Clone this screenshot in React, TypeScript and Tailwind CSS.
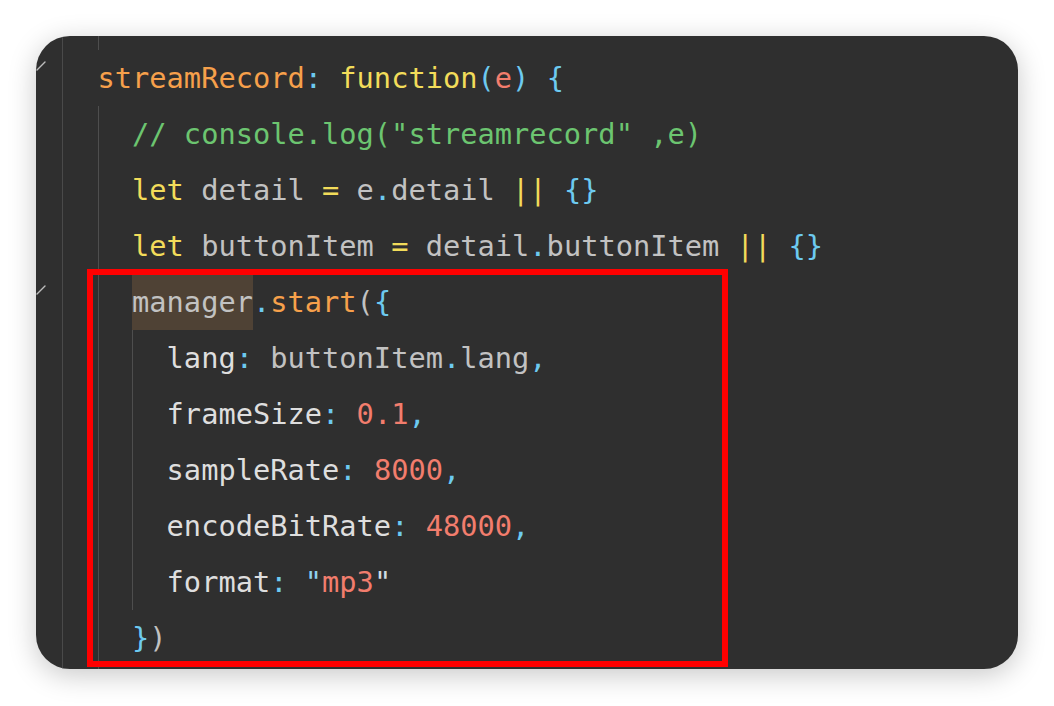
type Tok = [string, string];

const C = {
  orange: "text-[#f6a04b]",
  yellow: "text-[#f2dc5a]",
  blue: "text-[#6dcaf0]",
  salmon: "text-[#f27d6d]",
  green: "text-[#6cc570]",
  grey: "text-[#c2c2c2]",
  white: "text-[#dedede]",
};

interface Line {
  indent: number;
  guides: number[];
  fold?: boolean;
  tokens: Tok[];
}

const lines: Line[] = [
  {
    indent: 0,
    guides: [],
    fold: true,
    tokens: [
      ["streamRecord", C.orange],
      [":", C.blue],
      [" ", ""],
      ["function", C.yellow],
      ["(", C.blue],
      ["e", C.salmon],
      [")", C.blue],
      [" ", ""],
      ["{", C.blue],
    ],
  },
  {
    indent: 1,
    guides: [0],
    tokens: [['// console.log("streamrecord" ,e)', C.green]],
  },
  {
    indent: 1,
    guides: [0],
    tokens: [
      ["let", C.yellow],
      [" detail ", C.grey],
      ["=", C.yellow],
      [" e", C.grey],
      [".", C.blue],
      ["detail ", C.grey],
      ["||", C.yellow],
      [" ", ""],
      ["{}", C.blue],
    ],
  },
  {
    indent: 1,
    guides: [0],
    tokens: [
      ["let", C.yellow],
      [" buttonItem ", C.grey],
      ["=", C.yellow],
      [" detail", C.grey],
      [".", C.blue],
      ["buttonItem ", C.grey],
      ["||", C.yellow],
      [" ", ""],
      ["{}", C.blue],
    ],
  },
  {
    indent: 1,
    guides: [0],
    fold: true,
    tokens: [
      ["manager", C.grey + " bg-[#4f4235]"],
      [".", C.blue],
      ["start", C.orange],
      ["(", C.grey],
      ["{", C.blue],
    ],
  },
  {
    indent: 2,
    guides: [0, 1],
    tokens: [
      ["lang", C.white],
      [":", C.blue],
      [" buttonItem", C.grey],
      [".", C.blue],
      ["lang", C.grey],
      [",", C.blue],
    ],
  },
  {
    indent: 2,
    guides: [0, 1],
    tokens: [
      ["frameSize", C.white],
      [":", C.blue],
      [" ", ""],
      ["0.1", C.salmon],
      [",", C.blue],
    ],
  },
  {
    indent: 2,
    guides: [0, 1],
    tokens: [
      ["sampleRate", C.white],
      [":", C.blue],
      [" ", ""],
      ["8000", C.salmon],
      [",", C.blue],
    ],
  },
  {
    indent: 2,
    guides: [0, 1],
    tokens: [
      ["encodeBitRate", C.white],
      [":", C.blue],
      [" ", ""],
      ["48000", C.salmon],
      [",", C.blue],
    ],
  },
  {
    indent: 2,
    guides: [0, 1],
    tokens: [
      ["format", C.white],
      [":", C.blue],
      [" ", ""],
      ['"', "text-[#8fd2ee]"],
      ["mp3", C.salmon],
      ['"', "text-[#d0dce2]"],
    ],
  },
  {
    indent: 1,
    guides: [0],
    tokens: [
      ["}", C.blue],
      [")", C.grey],
    ],
  },
];

function Indents({ count, guides }: { count: number; guides: number[] }) {
  return (
    <>
      {Array.from({ length: count }).map((_, i) => (
        <span
          key={i}
          className={`h-full w-[34.55px] shrink-0 ${
            guides.includes(i) ? "border-l border-[#4e4e4e]" : ""
          }`}
        />
      ))}
    </>
  );
}

function FoldMark() {
  return (
    <svg width="12" height="12" viewBox="0 0 12 12" className="absolute left-0 top-[11px]">
      <path d="M1 9 L9 1" stroke="#bdbdbd" strokeWidth="1.4" strokeLinecap="round" fill="none" />
    </svg>
  );
}

export default function App() {
  return (
    <div className="w-[1054px] h-[706px] bg-white pt-[36px] pl-[36px]">
      <div className="relative w-[982px] h-[633px] rounded-[34px] bg-[#2f2f2f] overflow-hidden shadow-[0_6px_28px_rgba(0,0,0,0.22)] flex font-['DejaVu_Sans_Mono',monospace] text-[28.7px]">
        {/* gutter */}
        <div className="w-[27px] shrink-0 border-r border-[#4a4a4a] flex flex-col pt-[14px]">
          {lines.map((l, i) => (
            <div key={i} className="relative h-[56px]">
              {l.fold && <FoldMark />}
            </div>
          ))}
        </div>

        {/* code */}
        <div className="flex-1 flex flex-col">
          <div className="h-[14px] flex pl-[34.5px]">
            <Indents count={1} guides={[0]} />
          </div>
          {lines.map((l, i) => (
            <div key={i} className="h-[56px] flex items-stretch pl-[34.5px]">
              <Indents count={l.indent} guides={l.guides} />
              <div className="flex items-center whitespace-pre leading-none">
                {l.tokens.map(([t, cls], j) => (
                  <span
                    key={j}
                    className={`${cls} ${cls.includes("bg-") ? "py-[14px]" : ""}`}
                  >
                    {t}
                  </span>
                ))}
              </div>
            </div>
          ))}
          <div className="flex-1 flex pl-[34.5px]">
            <Indents count={1} guides={[0]} />
          </div>
        </div>

        {/* annotation */}
        <div className="absolute left-[51px] top-[233px] w-[641px] h-[398px] border-[6px] border-[#ff0000]" />
      </div>
    </div>
  );
}
